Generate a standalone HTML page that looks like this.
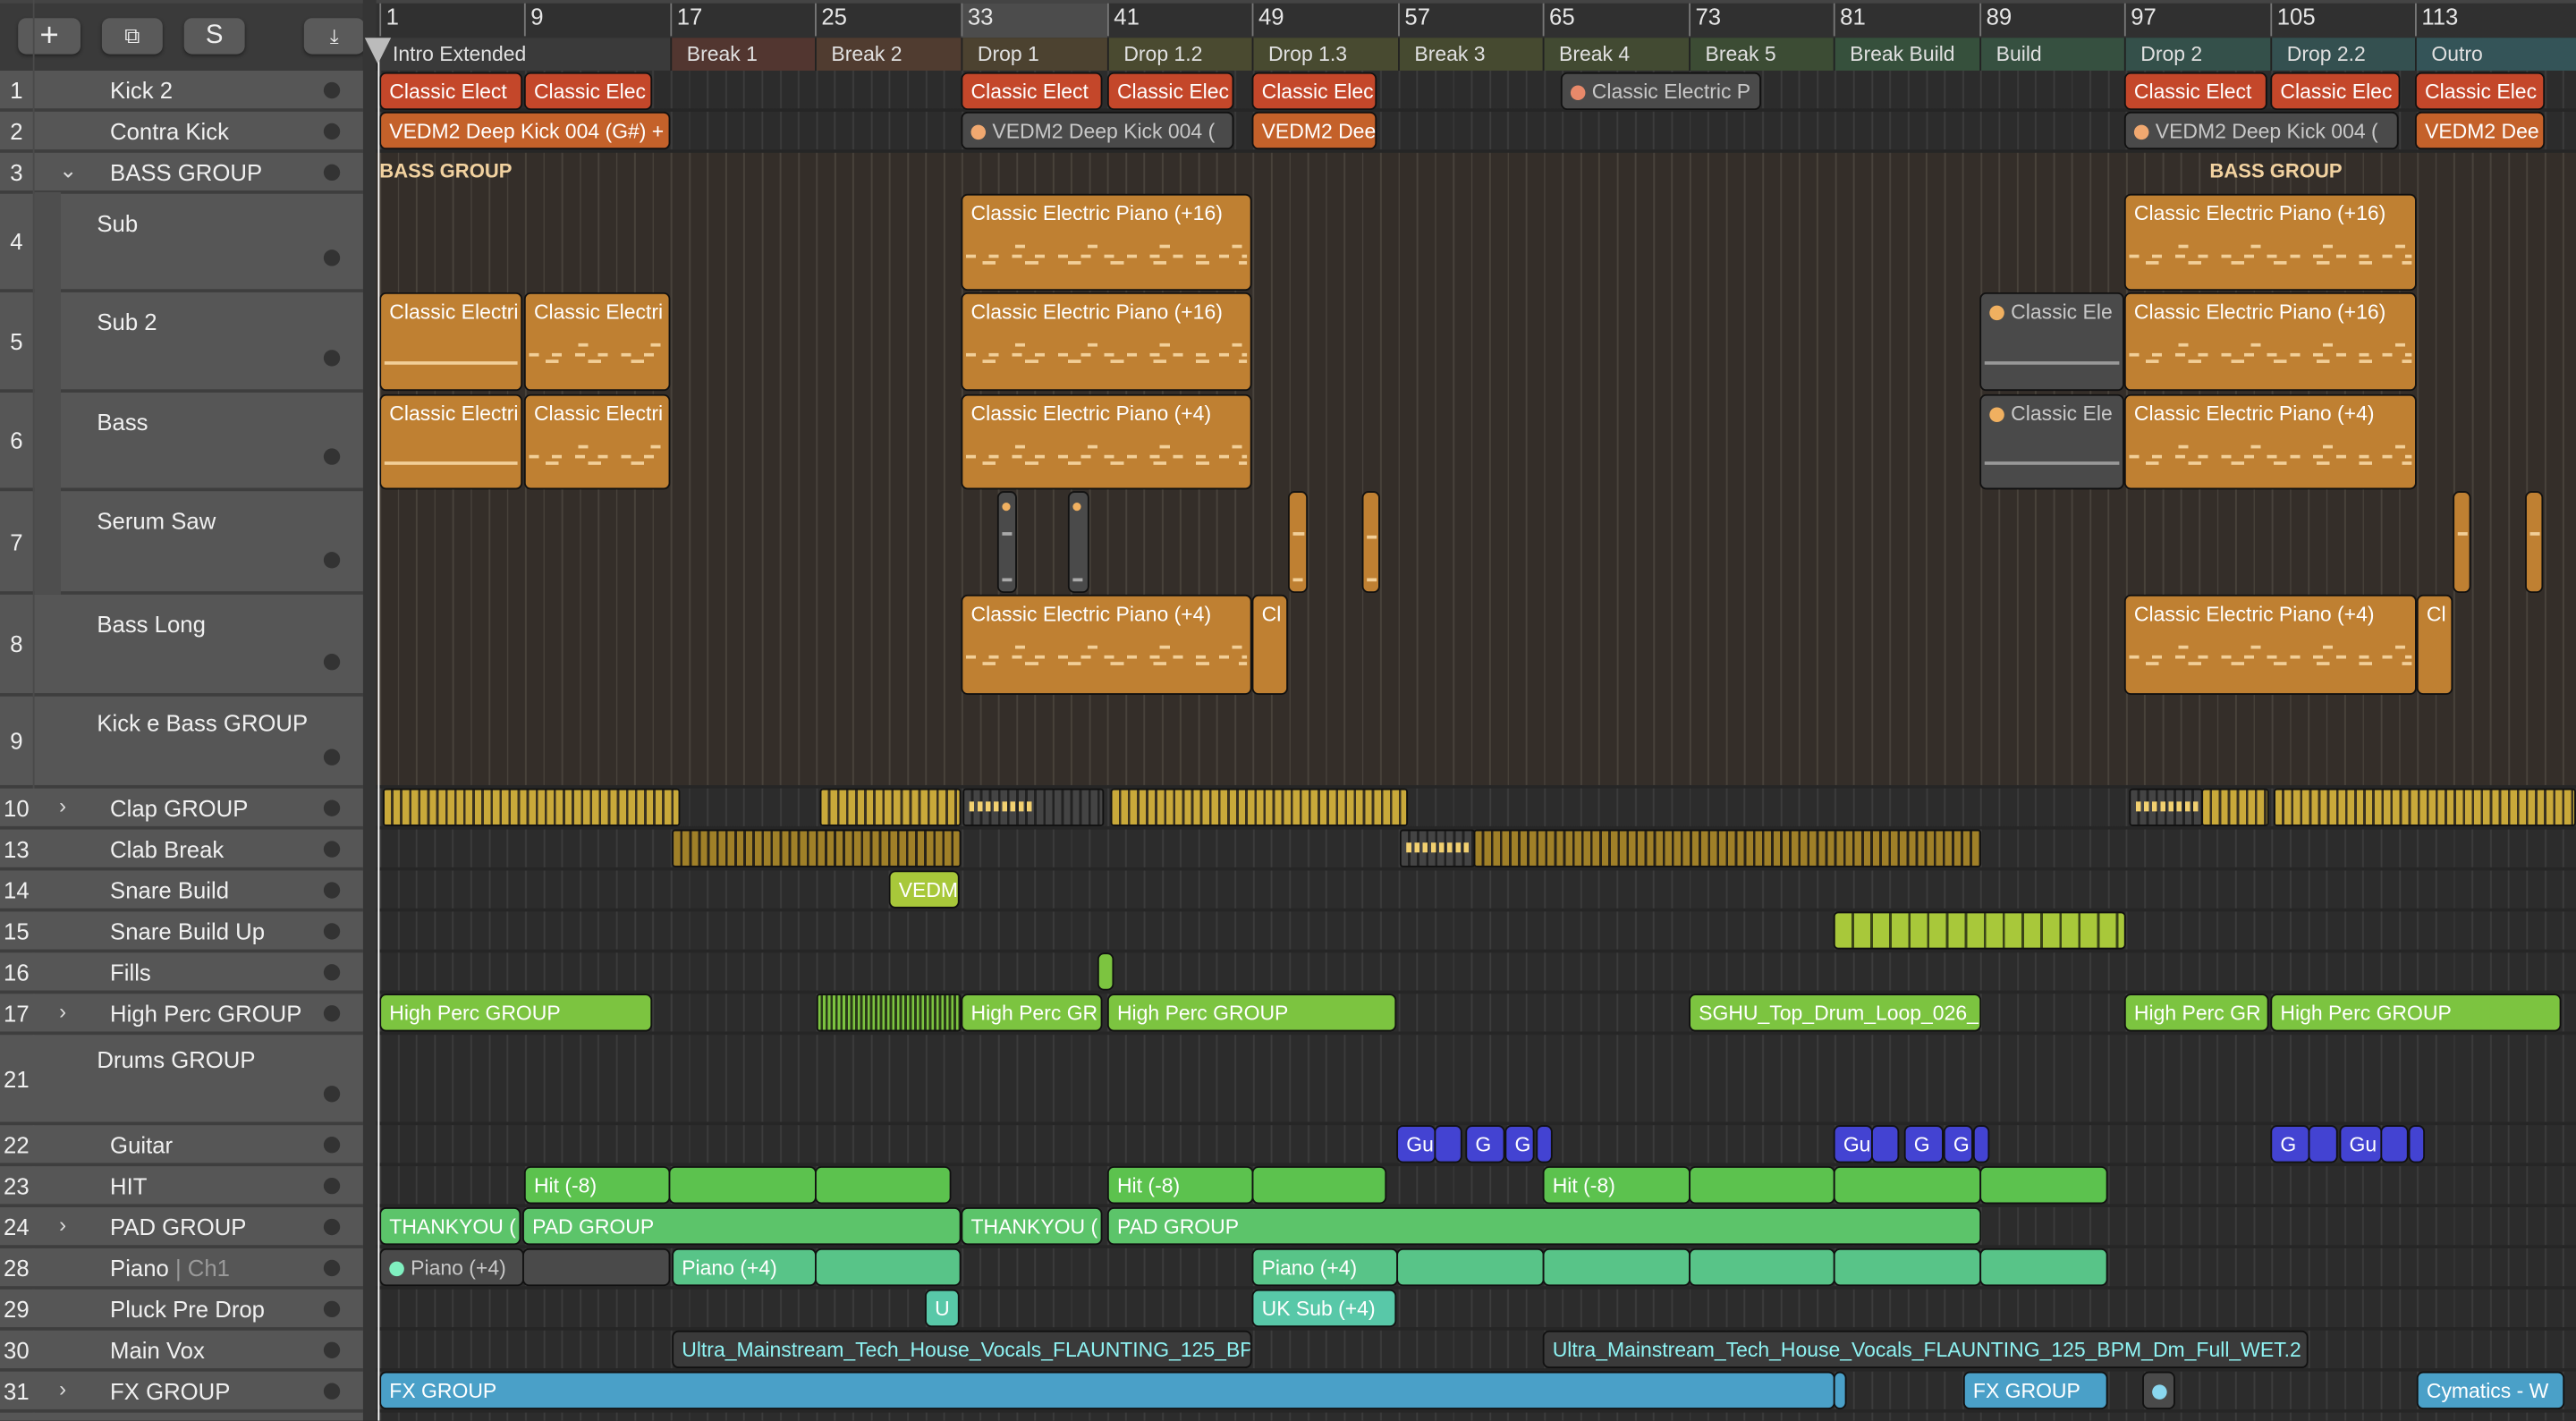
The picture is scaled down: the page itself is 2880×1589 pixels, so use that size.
<!DOCTYPE html>
<html><head><meta charset="utf-8">
<style>
html,body{margin:0;padding:0;background:#2b2b2b;overflow:hidden}
#w{position:absolute;left:0;top:0;width:1568px;height:865px;transform:scale(1.836735);transform-origin:0 0;background:#2b2b2b;font-family:"Liberation Sans",sans-serif;overflow:hidden}
.a{position:absolute}
.r{position:absolute;box-sizing:border-box;border:1px solid #111;border-radius:4px;color:#fff;font-size:12.5px;padding:3px 0 0 5px;white-space:nowrap;overflow:hidden;line-height:16px}
.red{background:#c4472a}.org{background:#c4612a}.gry{background:#4a4a4a;color:#c8c8c8}
.bo{background:#bf8032}
.grn{background:#7cc440}.hit{background:#5cc24e}.pad{background:#5cc46a}.pia{background:#58c488}.tl{background:#58c8a8}
.blu{background:#4343d2;color:#fff}.fx{background:#4aa0c8}
.yl{background:repeating-linear-gradient(90deg,#c9a93a 0 4px,#3a3220 4px 5.5px)}
.yd{background:repeating-linear-gradient(90deg,#a08028 0 4px,#2a2418 4px 5.5px)}
.dk{background:repeating-linear-gradient(90deg,#444 0 4px,#222 4px 5.5px)}
.lm{background:repeating-linear-gradient(90deg,#a8c83a 0 10px,#3a4418 10px 11.5px)}
.dot{display:inline-block;width:9px;height:9px;border-radius:5px;margin-right:4px;vertical-align:-1px}
.notes{position:absolute;left:2px;right:2px;top:30px;height:14px;background:
 repeating-linear-gradient(90deg,#f2cf98 0 6px,transparent 6px 14px) 0 6px/100% 2px no-repeat,
 repeating-linear-gradient(90deg,transparent 0 10px,#f2cf98 10px 18px,transparent 18px 26px) 0 10px/100% 2px no-repeat,
 repeating-linear-gradient(90deg,transparent 0 30px,#f2cf98 30px 36px,transparent 36px 44px) 0 0/100% 2px no-repeat}
.th{position:absolute;left:0;width:221px;background:#565656;border-bottom:2px solid #3e3e3e;box-sizing:border-box;color:#f0f0f0;font-size:14px}
.th .n{position:absolute;left:0;width:20px;text-align:center;top:50%;margin-top:-8px;line-height:16px}
.th .t{position:absolute;left:67px;top:50%;margin-top:-8px;line-height:16px}
.th .d{position:absolute;left:197px;top:50%;margin-top:-5px;width:10px;height:10px;border-radius:5px;background:#333}
.th .c{position:absolute;left:36px;top:50%;margin-top:-9px;font-size:13px;color:#ddd}
.mk{position:absolute;top:23px;height:20px;color:#e0e0e0;font-size:12.5px;line-height:20px;padding-left:9px;box-sizing:border-box;border-left:1px solid #222}
.rn{position:absolute;top:2px;color:#e6e6e6;font-size:14px;padding-left:3px;border-left:1px solid #777;height:20px;line-height:16px}
.btn{position:absolute;top:11px;height:22px;background:#5a5a5a;border-radius:5px;color:#eee;text-align:center;line-height:22px;font-size:16px;box-shadow:0 1px 2px #222}
.yd2{position:absolute;left:3px;top:7px;width:38px;height:6px;background:repeating-linear-gradient(90deg,#f2d070 0 3px,transparent 3px 5px)}
</style></head><body><div id="w">
<div class="a" style="left:229px;top:43px;width:1339px;height:822px;background:
repeating-linear-gradient(90deg,#3c3c3c 0 1px,transparent 1px 11.074px) 2px 0/100% 100%,#2c2c2c"></div>
<div class="a" style="left:229px;top:92px;width:1339px;height:387px;background:
repeating-linear-gradient(90deg,#48423b 0 1px,transparent 1px 11.074px) 2px 0/100% 100%,#342e29"></div>
<div class="a" style="left:229px;top:0;width:1339px;height:865px;background:
linear-gradient(#262626,#262626) 0 66px/100% 2px no-repeat,
linear-gradient(#262626,#262626) 0 91px/100% 2px no-repeat,
linear-gradient(#262626,#262626) 0 478px/100% 2px no-repeat,
linear-gradient(#262626,#262626) 0 503px/100% 2px no-repeat,
linear-gradient(#262626,#262626) 0 528px/100% 2px no-repeat,
linear-gradient(#262626,#262626) 0 553px/100% 2px no-repeat,
linear-gradient(#262626,#262626) 0 578px/100% 2px no-repeat,
linear-gradient(#262626,#262626) 0 603px/100% 2px no-repeat,
linear-gradient(#262626,#262626) 0 628px/100% 2px no-repeat,
linear-gradient(#262626,#262626) 0 683px/100% 2px no-repeat,
linear-gradient(#262626,#262626) 0 708px/100% 2px no-repeat,
linear-gradient(#262626,#262626) 0 733px/100% 2px no-repeat,
linear-gradient(#262626,#262626) 0 758px/100% 2px no-repeat,
linear-gradient(#262626,#262626) 0 783px/100% 2px no-repeat,
linear-gradient(#262626,#262626) 0 808px/100% 2px no-repeat,
linear-gradient(#262626,#262626) 0 833px/100% 2px no-repeat,
linear-gradient(#262626,#262626) 0 858px/100% 2px no-repeat"></div>

<div class="a" style="left:221px;top:0;width:1347px;height:23px;background:#303030;border-top:2px solid #444;box-sizing:border-box"></div>
<div class="a" style="left:585px;top:2px;width:89px;height:21px;background:#4c4c4c"></div>
<div class="rn" style="left:231px">1</div><div class="rn" style="left:319px">9</div><div class="rn" style="left:408px">17</div><div class="rn" style="left:496px">25</div><div class="rn" style="left:585px">33</div><div class="rn" style="left:674px">41</div><div class="rn" style="left:762px">49</div><div class="rn" style="left:851px">57</div><div class="rn" style="left:939px">65</div><div class="rn" style="left:1028px">73</div><div class="rn" style="left:1116px">81</div><div class="rn" style="left:1205px">89</div><div class="rn" style="left:1293px">97</div><div class="rn" style="left:1382px">105</div><div class="rn" style="left:1470px">113</div>
<div class="a" style="left:221px;top:23px;width:1347px;height:20px;background:#2c2c2c"></div>
<div class="mk" style="left:229px;width:179px;background:#3a3a3a">Intro Extended</div>
<div class="mk" style="left:408px;width:88px;background:#523630">Break 1</div>
<div class="mk" style="left:496px;width:89px;background:#503c30">Break 2</div>
<div class="mk" style="left:585px;width:89px;background:#4c4230">Drop 1</div>
<div class="mk" style="left:674px;width:88px;background:#4a4a30">Drop 1.2</div>
<div class="mk" style="left:762px;width:89px;background:#484a30">Drop 1.3</div>
<div class="mk" style="left:851px;width:88px;background:#464a30">Break 3</div>
<div class="mk" style="left:939px;width:89px;background:#424a32">Break 4</div>
<div class="mk" style="left:1028px;width:88px;background:#3c4c34">Break 5</div>
<div class="mk" style="left:1116px;width:89px;background:#36503c">Break Build</div>
<div class="mk" style="left:1205px;width:88px;background:#365040">Build</div>
<div class="mk" style="left:1293px;width:89px;background:#34504a">Drop 2</div>
<div class="mk" style="left:1382px;width:88px;background:#345050">Drop 2.2</div>
<div class="mk" style="left:1470px;width:98px;background:#345458">Outro</div>

<div class="a" style="left:0;top:0;width:221px;height:43px;background:#3a3a3a;border-top:2px solid #444;box-sizing:border-box"></div>
<div class="btn" style="left:11px;width:38px;font-size:20px">+</div>
<div class="btn" style="left:62px;width:37px;font-size:13px">⧉</div>
<div class="btn" style="left:112px;width:37px">S</div>
<div class="btn" style="left:185px;width:37px;font-size:12px">⤓</div>
<div class="a" style="left:221px;top:0;width:8px;height:865px;background:#353535"></div>

<div class="th" style="top:43px;height:25px"><span class="n">1</span><span class="t">Kick 2</span><span class="d"></span></div>
<div class="th" style="top:68px;height:25px"><span class="n">2</span><span class="t">Contra Kick</span><span class="d"></span></div>
<div class="th" style="top:93px;height:25px"><span class="n">3</span><span class="c">⌄</span><span class="t">BASS GROUP</span><span class="d"></span></div>
<div class="th" style="top:118px;height:60px"><span class="n">4</span><span class="t" style="left:59px;top:10px;margin:0">Sub</span><span class="d" style="top:auto;bottom:14px;margin:0"></span></div>
<div class="th" style="top:178px;height:61px"><span class="n">5</span><span class="t" style="left:59px;top:10px;margin:0">Sub 2</span><span class="d" style="top:auto;bottom:14px;margin:0"></span></div>
<div class="th" style="top:239px;height:60px"><span class="n">6</span><span class="t" style="left:59px;top:10px;margin:0">Bass</span><span class="d" style="top:auto;bottom:14px;margin:0"></span></div>
<div class="th" style="top:299px;height:63px"><span class="n">7</span><span class="t" style="left:59px;top:10px;margin:0">Serum Saw</span><span class="d" style="top:auto;bottom:14px;margin:0"></span></div>
<div class="th" style="top:362px;height:62px"><span class="n">8</span><span class="t" style="left:59px;top:10px;margin:0">Bass Long</span><span class="d" style="top:auto;bottom:14px;margin:0"></span></div>
<div class="th" style="top:424px;height:56px"><span class="n">9</span><span class="t" style="left:59px;top:8px;margin:0">Kick e Bass GROUP</span><span class="d" style="top:auto;bottom:12px;margin:0"></span></div>
<div class="a" style="left:21px;top:117px;width:16px;height:245px;background:#4e4e4e"></div>
<div class="a" style="left:20px;top:0;width:1px;height:865px;background:#4a4a4a"></div>
<div class="th" style="top:480px;height:25px"><span class="n">10</span><span class="c">›</span><span class="t">Clap GROUP</span><span class="d"></span></div>
<div class="th" style="top:505px;height:25px"><span class="n">13</span><span class="t">Clab Break</span><span class="d"></span></div>
<div class="th" style="top:530px;height:25px"><span class="n">14</span><span class="t">Snare Build</span><span class="d"></span></div>
<div class="th" style="top:555px;height:25px"><span class="n">15</span><span class="t">Snare Build Up</span><span class="d"></span></div>
<div class="th" style="top:580px;height:25px"><span class="n">16</span><span class="t">Fills</span><span class="d"></span></div>
<div class="th" style="top:605px;height:25px"><span class="n">17</span><span class="c">›</span><span class="t">High Perc GROUP</span><span class="d"></span></div>
<div class="th" style="top:630px;height:55px"><span class="n">21</span><span class="t" style="left:59px;top:7px;margin:0">Drums GROUP</span><span class="d" style="top:auto;bottom:12px;margin:0"></span></div>
<div class="th" style="top:685px;height:25px"><span class="n">22</span><span class="t">Guitar</span><span class="d"></span></div>
<div class="th" style="top:710px;height:25px"><span class="n">23</span><span class="t">HIT</span><span class="d"></span></div>
<div class="th" style="top:735px;height:25px"><span class="n">24</span><span class="c">›</span><span class="t">PAD GROUP</span><span class="d"></span></div>
<div class="th" style="top:760px;height:25px"><span class="n">28</span><span class="t">Piano <span style="color:#9a9a9a">| Ch1</span></span><span class="d"></span></div>
<div class="th" style="top:785px;height:25px"><span class="n">29</span><span class="t">Pluck Pre Drop</span><span class="d"></span></div>
<div class="th" style="top:810px;height:25px"><span class="n">30</span><span class="t">Main Vox</span><span class="d"></span></div>
<div class="th" style="top:835px;height:25px"><span class="n">31</span><span class="c">›</span><span class="t">FX GROUP</span><span class="d"></span></div>
<div class="th" style="top:860px;height:5px;border:0"></div>

<div class="r red" style="left:231px;top:44px;width:87px;height:23px">Classic Elect</div>
<div class="r red" style="left:319px;top:44px;width:78px;height:23px">Classic Elec</div>
<div class="r red" style="left:585px;top:44px;width:86px;height:23px">Classic Elect</div>
<div class="r red" style="left:674px;top:44px;width:77px;height:23px">Classic Elec</div>
<div class="r red" style="left:762px;top:44px;width:76px;height:23px">Classic Elec</div>
<div class="r gry" style="left:950px;top:44px;width:122px;height:23px"><span class="dot" style="background:#e8896a"></span>Classic Electric P</div>
<div class="r red" style="left:1293px;top:44px;width:87px;height:23px">Classic Elect</div>
<div class="r red" style="left:1382px;top:44px;width:79px;height:23px">Classic Elec</div>
<div class="r red" style="left:1470px;top:44px;width:79px;height:23px">Classic Elec</div>
<div class="r org" style="left:231px;top:68px;width:177px;height:23px">VEDM2 Deep Kick 004 (G#) +</div>
<div class="r gry" style="left:585px;top:68px;width:166px;height:23px"><span class="dot" style="background:#f0a870"></span>VEDM2 Deep Kick 004 (</div>
<div class="r org" style="left:762px;top:68px;width:76px;height:23px">VEDM2 Dee</div>
<div class="r gry" style="left:1293px;top:68px;width:167px;height:23px"><span class="dot" style="background:#f0a870"></span>VEDM2 Deep Kick 004 (</div>
<div class="r org" style="left:1470px;top:68px;width:79px;height:23px">VEDM2 Dee</div>
<div class="a" style="left:231px;top:97px;color:#f2d2a0;font-weight:bold;font-size:12px">BASS GROUP</div>
<div class="a" style="left:1345px;top:97px;color:#f2d2a0;font-weight:bold;font-size:12px">BASS GROUP</div>
<div class="r bo" style="left:585px;top:118px;width:177px;height:59px">Classic Electric Piano (+16)<div class="notes"></div></div>
<div class="r bo" style="left:1293px;top:118px;width:178px;height:59px">Classic Electric Piano (+16)<div class="notes"></div></div>
<div class="r bo" style="left:231px;top:178px;width:87px;height:60px">Classic Electri<div class="a" style="left:2px;right:2px;top:41px;height:2px;background:#f2cf98"></div></div>
<div class="r bo" style="left:319px;top:178px;width:89px;height:60px">Classic Electri<div class="notes"></div></div>
<div class="r bo" style="left:585px;top:178px;width:177px;height:60px">Classic Electric Piano (+16)<div class="notes"></div></div>
<div class="r gry" style="left:1205px;top:178px;width:88px;height:60px"><span class="dot" style="background:#f0b060"></span>Classic Ele<div class="a" style="left:2px;right:2px;top:41px;height:2px;background:#999"></div></div>
<div class="r bo" style="left:1293px;top:178px;width:178px;height:60px">Classic Electric Piano (+16)<div class="notes"></div></div>
<div class="r bo" style="left:231px;top:240px;width:87px;height:58px">Classic Electri<div class="a" style="left:2px;right:2px;top:40px;height:2px;background:#f2cf98"></div></div>
<div class="r bo" style="left:319px;top:240px;width:89px;height:58px">Classic Electri<div class="notes"></div></div>
<div class="r bo" style="left:585px;top:240px;width:177px;height:58px">Classic Electric Piano (+4)<div class="notes"></div></div>
<div class="r gry" style="left:1205px;top:240px;width:88px;height:58px"><span class="dot" style="background:#f0b060"></span>Classic Ele<div class="a" style="left:2px;right:2px;top:40px;height:2px;background:#999"></div></div>
<div class="r bo" style="left:1293px;top:240px;width:178px;height:58px">Classic Electric Piano (+4)<div class="notes"></div></div>
<div class="r gry" style="left:607px;top:299px;width:12px;height:62px;padding:0"><div class="a" style="left:2px;top:6px;width:5px;height:5px;border-radius:3px;background:#f0b060"></div><div class="a" style="left:2px;top:24px;width:6px;height:2px;background:#aaa"></div><div class="a" style="left:2px;top:52px;width:6px;height:2px;background:#aaa"></div></div>
<div class="r gry" style="left:650px;top:299px;width:13px;height:62px;padding:0"><div class="a" style="left:2px;top:6px;width:5px;height:5px;border-radius:3px;background:#f0b060"></div><div class="a" style="left:2px;top:52px;width:6px;height:2px;background:#aaa"></div></div>
<div class="r bo" style="left:784px;top:299px;width:12px;height:62px;padding:0"><div class="a" style="left:2px;top:24px;width:7px;height:2px;background:#f2cf98"></div><div class="a" style="left:2px;top:52px;width:6px;height:2px;background:#f2cf98"></div></div>
<div class="r bo" style="left:829px;top:299px;width:11px;height:62px;padding:0"><div class="a" style="left:2px;top:26px;width:6px;height:2px;background:#f2cf98"></div><div class="a" style="left:2px;top:52px;width:6px;height:2px;background:#f2cf98"></div></div>
<div class="r bo" style="left:1493px;top:299px;width:11px;height:62px;padding:0"><div class="a" style="left:2px;top:24px;width:6px;height:2px;background:#f2cf98"></div></div>
<div class="r bo" style="left:1537px;top:299px;width:11px;height:62px;padding:0"><div class="a" style="left:2px;top:24px;width:6px;height:2px;background:#f2cf98"></div></div>
<div class="r bo" style="left:585px;top:362px;width:177px;height:61px">Classic Electric Piano (+4)<div class="notes"></div></div>
<div class="r bo" style="left:762px;top:362px;width:22px;height:61px">Cl</div>
<div class="r bo" style="left:1293px;top:362px;width:178px;height:61px">Classic Electric Piano (+4)<div class="notes"></div></div>
<div class="r bo" style="left:1471px;top:362px;width:22px;height:61px">Cl</div>
<div class="r yl" style="left:233px;top:480px;width:181px;height:23px;border-radius:2px"></div>
<div class="r yl" style="left:499px;top:480px;width:86px;height:23px;border-radius:2px"></div>
<div class="r dk" style="left:586px;top:480px;width:86px;height:23px;border-radius:2px"><div class="yd2"></div></div>
<div class="r yl" style="left:676px;top:480px;width:181px;height:23px;border-radius:2px"></div>
<div class="r dk" style="left:1296px;top:480px;width:45px;height:23px;border-radius:2px"><div class="yd2"></div></div>
<div class="r yl" style="left:1340px;top:480px;width:41px;height:23px;border-radius:2px"></div>
<div class="r yl" style="left:1384px;top:480px;width:184px;height:23px;border-radius:2px"></div>
<div class="r yd" style="left:409px;top:505px;width:176px;height:23px;border-radius:2px"></div>
<div class="r dk" style="left:852px;top:505px;width:46px;height:23px;border-radius:2px"><div class="yd2"></div></div>
<div class="r yd" style="left:897px;top:505px;width:309px;height:23px;border-radius:2px"></div>
<div class="r" style="left:541px;top:530px;width:43px;height:23px;background:#a8c83a">VEDM</div>
<div class="r lm" style="left:1116px;top:555px;width:178px;height:23px;border-radius:3px"></div>
<div class="r" style="left:668px;top:580px;width:10px;height:23px;background:#7cc440;padding:0"></div>
<div class="r grn" style="left:231px;top:605px;width:166px;height:23px">High Perc GROUP</div>
<div class="r" style="left:497px;top:605px;width:88px;height:23px;border-radius:2px;background:repeating-linear-gradient(90deg,#7cc440 0 1.5px,#2a3a18 1.5px 3px)"></div>
<div class="r grn" style="left:585px;top:605px;width:86px;height:23px">High Perc GR</div>
<div class="r grn" style="left:674px;top:605px;width:176px;height:23px">High Perc GROUP</div>
<div class="r grn" style="left:1028px;top:605px;width:178px;height:23px">SGHU_Top_Drum_Loop_026_</div>
<div class="r grn" style="left:1293px;top:605px;width:88px;height:23px">High Perc GR</div>
<div class="r grn" style="left:1382px;top:605px;width:177px;height:23px">High Perc GROUP</div>
<div class="r blu" style="left:850px;top:685px;width:24px;height:23px">Gu</div>
<div class="r blu" style="left:873px;top:685px;width:17px;height:23px"></div>
<div class="r blu" style="left:892px;top:685px;width:24px;height:23px">G</div>
<div class="r blu" style="left:916px;top:685px;width:18px;height:23px">G</div>
<div class="r blu" style="left:935px;top:685px;width:10px;height:23px"></div>
<div class="r blu" style="left:1116px;top:685px;width:24px;height:23px">Gu</div>
<div class="r blu" style="left:1139px;top:685px;width:17px;height:23px"></div>
<div class="r blu" style="left:1159px;top:685px;width:24px;height:23px">G</div>
<div class="r blu" style="left:1183px;top:685px;width:18px;height:23px">G</div>
<div class="r blu" style="left:1201px;top:685px;width:10px;height:23px"></div>
<div class="r blu" style="left:1382px;top:685px;width:24px;height:23px">G</div>
<div class="r blu" style="left:1405px;top:685px;width:18px;height:23px"></div>
<div class="r blu" style="left:1424px;top:685px;width:26px;height:23px">Gu</div>
<div class="r blu" style="left:1449px;top:685px;width:17px;height:23px"></div>
<div class="r blu" style="left:1466px;top:685px;width:10px;height:23px"></div>
<div class="r hit" style="left:319px;top:710px;width:89px;height:23px">Hit (-8)</div>
<div class="r hit" style="left:407px;top:710px;width:90px;height:23px"></div>
<div class="r hit" style="left:496px;top:710px;width:83px;height:23px"></div>
<div class="r hit" style="left:674px;top:710px;width:89px;height:23px">Hit (-8)</div>
<div class="r hit" style="left:762px;top:710px;width:82px;height:23px"></div>
<div class="r hit" style="left:939px;top:710px;width:90px;height:23px">Hit (-8)</div>
<div class="r hit" style="left:1028px;top:710px;width:89px;height:23px"></div>
<div class="r hit" style="left:1116px;top:710px;width:90px;height:23px"></div>
<div class="r hit" style="left:1205px;top:710px;width:78px;height:23px"></div>
<div class="r pad" style="left:231px;top:735px;width:86px;height:23px">THANKYOU (</div>
<div class="r pad" style="left:318px;top:735px;width:267px;height:23px">PAD GROUP</div>
<div class="r pad" style="left:585px;top:735px;width:86px;height:23px">THANKYOU (</div>
<div class="r pad" style="left:674px;top:735px;width:532px;height:23px">PAD GROUP</div>
<div class="r gry" style="left:231px;top:760px;width:88px;height:23px"><span class="dot" style="background:#80f0c0"></span>Piano (+4)</div>
<div class="r gry" style="left:318px;top:760px;width:90px;height:23px"></div>
<div class="r pia" style="left:409px;top:760px;width:88px;height:23px">Piano (+4)</div>
<div class="r pia" style="left:496px;top:760px;width:89px;height:23px"></div>
<div class="r pia" style="left:762px;top:760px;width:89px;height:23px">Piano (+4)</div>
<div class="r pia" style="left:850px;top:760px;width:90px;height:23px"></div>
<div class="r pia" style="left:939px;top:760px;width:90px;height:23px"></div>
<div class="r pia" style="left:1028px;top:760px;width:89px;height:23px"></div>
<div class="r pia" style="left:1116px;top:760px;width:90px;height:23px"></div>
<div class="r pia" style="left:1205px;top:760px;width:78px;height:23px"></div>
<div class="r tl" style="left:563px;top:785px;width:21px;height:23px">U</div>
<div class="r tl" style="left:762px;top:785px;width:88px;height:23px">UK Sub (+4)</div>
<div class="r" style="left:409px;top:810px;width:353px;height:23px;background:#3a3a3a;color:#8ef2f2">Ultra_Mainstream_Tech_House_Vocals_FLAUNTING_125_BP</div>
<div class="r" style="left:939px;top:810px;width:466px;height:23px;background:#3a3a3a;color:#8ef2f2">Ultra_Mainstream_Tech_House_Vocals_FLAUNTING_125_BPM_Dm_Full_WET.2</div>
<div class="r fx" style="left:231px;top:835px;width:886px;height:23px">FX GROUP</div>
<div class="r fx" style="left:1116px;top:835px;width:8px;height:23px;padding:0"></div>
<div class="r fx" style="left:1195px;top:835px;width:88px;height:23px">FX GROUP</div>
<div class="r gry" style="left:1304px;top:835px;width:20px;height:23px"><span class="dot" style="background:#8ad8f0"></span></div>
<div class="r fx" style="left:1471px;top:835px;width:90px;height:23px">Cymatics - W</div>

<div class="a" style="left:230px;top:25px;width:1px;height:840px;background:#fff"></div>
<div class="a" style="left:222px;top:23px;width:0;height:0;border-left:8px solid transparent;border-right:8px solid transparent;border-top:16px solid #bbb"></div>
</div></body></html>
